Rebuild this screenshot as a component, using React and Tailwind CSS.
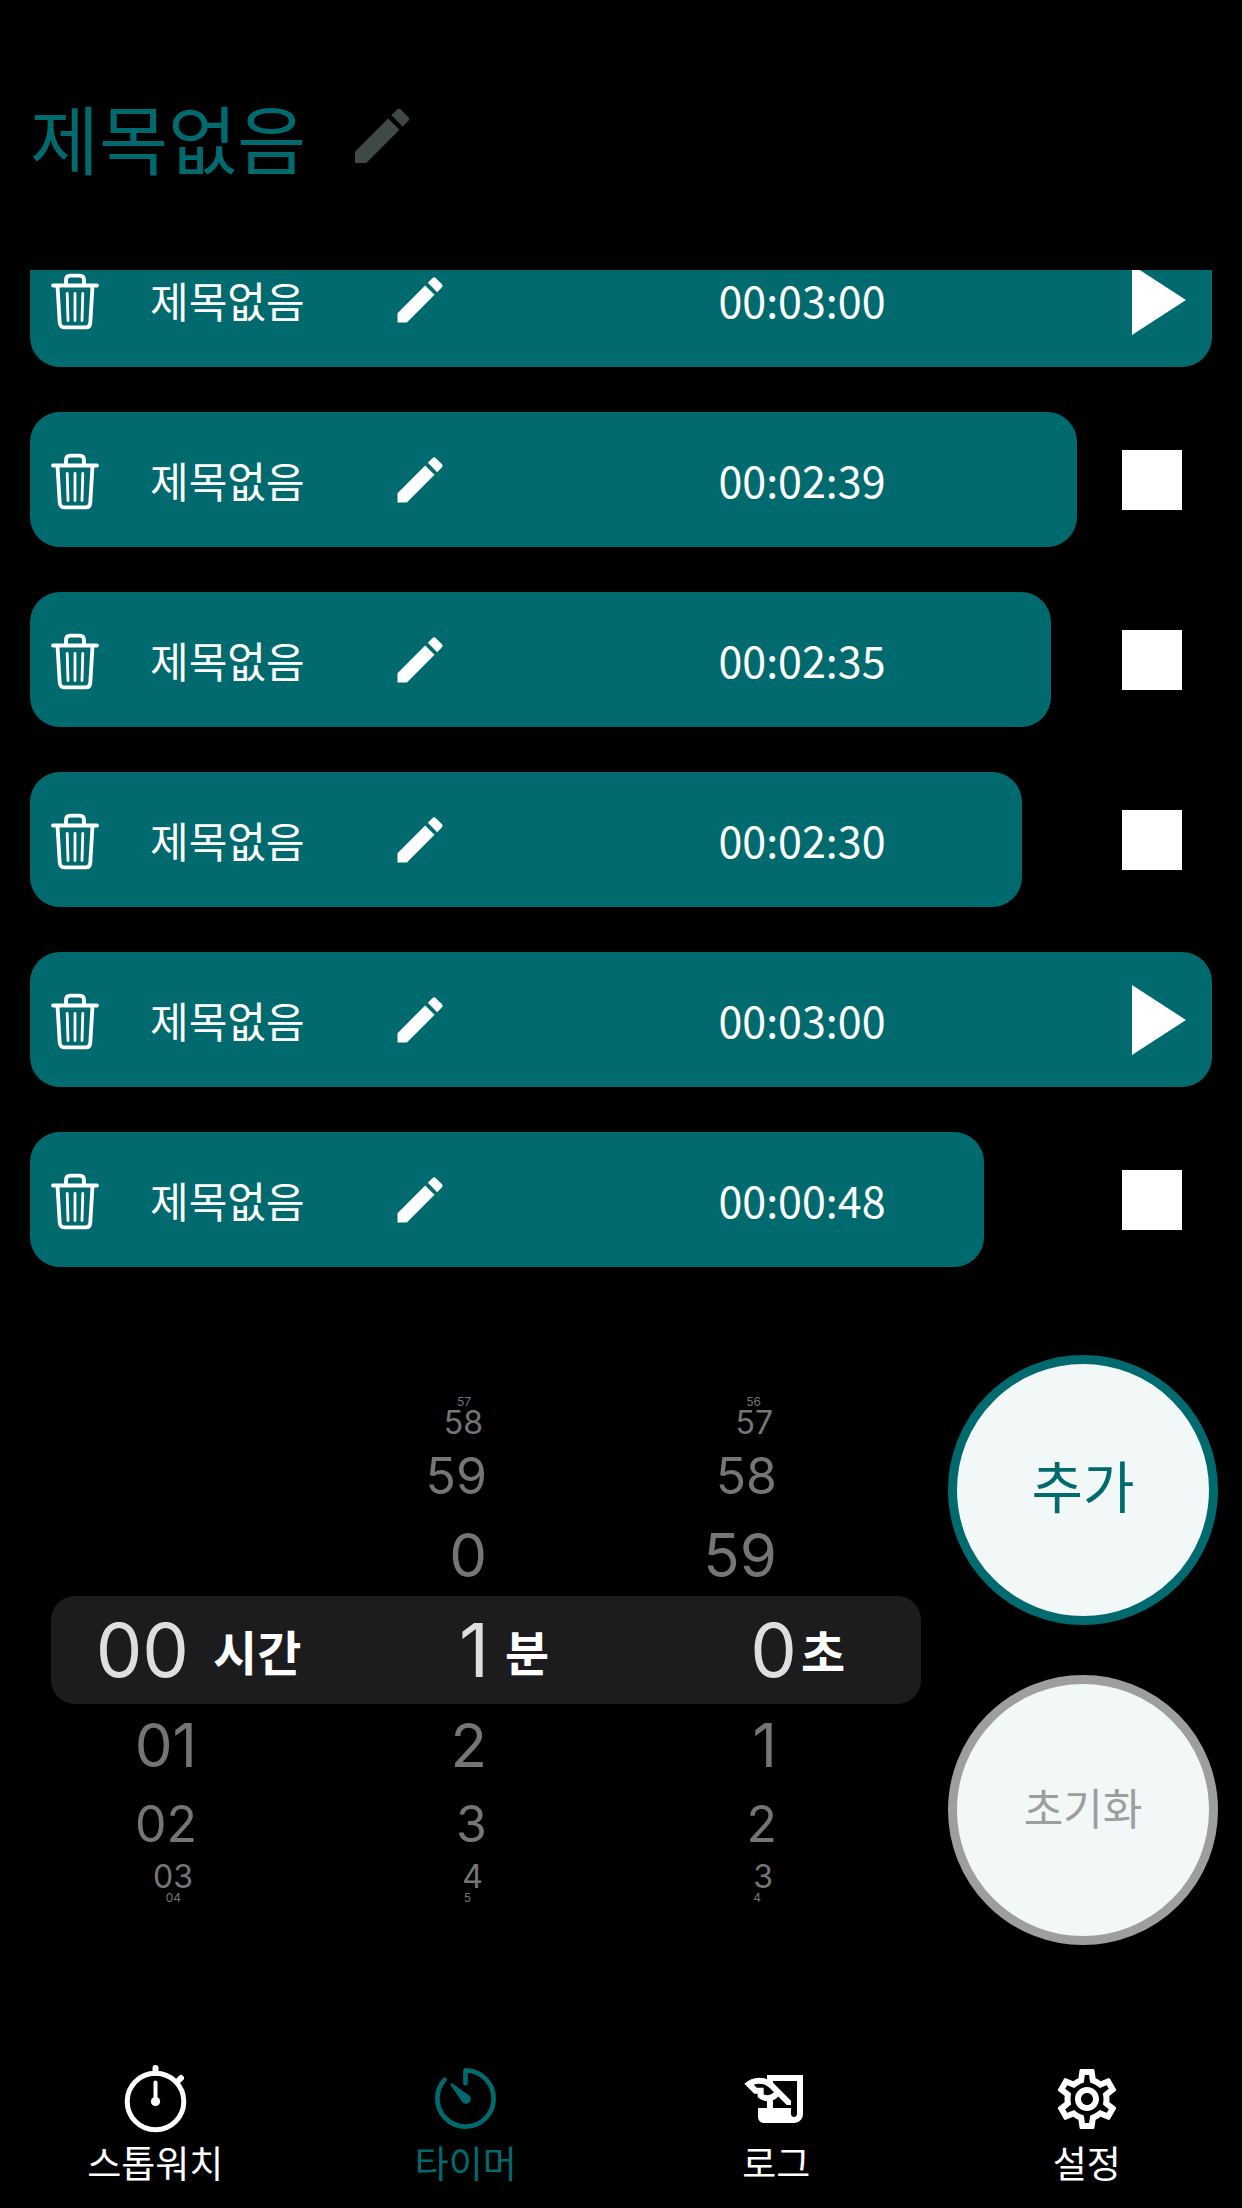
import { useState } from "react";
import { MdEdit, MdHistoryEdu, MdOutlineSettings } from "react-icons/md";
import { IoTimerOutline } from "react-icons/io5";

const initialTimers = [
  { id: 1, title: "제목없음", time: "00:03:00", left: 100, running: false },
  { id: 2, title: "제목없음", time: "00:02:39", left: 88.6, running: true },
  { id: 3, title: "제목없음", time: "00:02:35", left: 86.4, running: true },
  { id: 4, title: "제목없음", time: "00:02:30", left: 83.9, running: true },
  { id: 5, title: "제목없음", time: "00:03:00", left: 100, running: false },
  { id: 6, title: "제목없음", time: "00:00:48", left: 80.7, running: true },
];

const wheels = [
  {
    unit: "시간",
    above: ["", "", "", ""],
    value: "00",
    below: ["01", "02", "03", "04"],
    valueClass: "w-[138px]",
    unitClass: "pl-6",
  },
  {
    unit: "분",
    above: ["57", "58", "59", "0"],
    value: "1",
    below: ["2", "3", "4", "5"],
    valueClass: "w-[148px]",
    unitClass: "pl-4",
  },
  {
    unit: "초",
    above: ["56", "57", "58", "59"],
    value: "0",
    below: ["1", "2", "3", "4"],
    valueClass: "w-[166px]",
    unitClass: "pl-1",
  },
];

// rows get smaller the further they are from the selected one
const aboveRows = [
  "h-[12px] pr-4 text-[12px] leading-[12px]",
  "h-[30px] pr-1 text-[32px] leading-[30px]",
  "h-[76px] text-[50px] leading-[76px]",
  "h-[82px] text-[60px] leading-[82px]",
];

const belowRows = [
  "h-[82px] text-[60px] leading-[82px]",
  "h-[76px] text-[50px] leading-[76px]",
  "h-[30px] pr-1 text-[32px] leading-[30px]",
  "h-[12px] pr-4 text-[12px] leading-[12px]",
];

const tabs = [
  { value: "stopwatch", label: "스톱워치", icon: <StopwatchIcon /> },
  { value: "timer", label: "타이머", icon: <IoTimerOutline size={75} /> },
  { value: "log", label: "로그", icon: <MdHistoryEdu size={72} /> },
  { value: "settings", label: "설정", icon: <MdOutlineSettings size={72} /> },
];

function TrashIcon() {
  return (
    <svg
      viewBox="0 0 64 64"
      className="size-16"
      fill="none"
      stroke="currentColor"
      strokeLinecap="round"
      strokeLinejoin="round"
    >
      <path
        strokeWidth="3.8"
        d="M10 17.500H54M14.500 18L16.700 54.500C16.900 57.500 18.300 59.300 21 59.300H43C45.700 59.300 47.100 57.500 47.300 54.500L49.500 18M23 17V12Q23 7.700 27.300 7.700H36.700Q41 7.700 41 12V17"
      />
      <path strokeWidth="2.800" d="M24.200 25.500L25 52.500M32 25.500V52.500M39.800 25.500L39 52.500" />
    </svg>
  );
}

function StopwatchIcon() {
  return (
    <svg viewBox="0 0 75 75" width="75" height="75" fill="none" stroke="currentColor" strokeLinecap="round">
      <circle cx="37.500" cy="40.500" r="28.300" strokeWidth="5" />
      <path strokeWidth="6" d="M37.500 7V12M60 20L63 17" />
      <path strokeWidth="4" d="M37.500 21.500V40" />
      <circle cx="37.500" cy="40.500" r="4.600" fill="currentColor" stroke="none" />
    </svg>
  );
}

function TimerRow({ timer, onToggle, onDelete }) {
  return (
    <li className="grid h-[135px]">
      <div
        className="col-start-1 row-start-1 rounded-[30px] bg-[#006a6e]"
        style={{ width: `${timer.left}%` }}
      />
      <div className="col-start-1 row-start-1 grid grid-cols-[120px_240px_60px_1fr_120px] items-center">
        <button aria-label="삭제" onClick={onDelete} className="ml-[13px] justify-self-start">
          <TrashIcon />
        </button>
        <span className="text-[42px]">{timer.title}</span>
        <button aria-label="제목 수정">
          <MdEdit size={60} />
        </button>
        <span className="pl-[62px] text-center text-[43px]">{timer.time}</span>
        <button
          aria-label={timer.running ? "정지" : "시작"}
          onClick={onToggle}
          className="justify-self-center"
        >
          {timer.running ? (
            <svg viewBox="0 0 72 72" className="size-[72px]" fill="currentColor">
              <path d="M6 6H66V66H6Z" />
            </svg>
          ) : (
            <svg viewBox="0 0 72 72" className="size-[72px]" fill="currentColor">
              <path d="M16 1L70 36L16 71Z" />
            </svg>
          )}
        </button>
      </div>
    </li>
  );
}

function Wheel({ wheel }) {
  return (
    <div role="listbox" aria-label={wheel.unit} className="flex-1 text-[#757575]">
      {wheel.above.map((n, idx) => (
        <div key={idx} className={`w-[146px] text-right ${aboveRows[idx]}`}>
          {n}
        </div>
      ))}
      <div role="option" aria-selected="true" className="flex h-[108px] items-center">
        <span className={`text-right text-[74px] text-[#dedee0] ${wheel.valueClass}`}>
          {wheel.value}
        </span>
        <span
          className={`font-['Noto_Sans_CJK_KR',sans-serif] text-[48px] font-bold text-white ${wheel.unitClass}`}
        >
          {wheel.unit}
        </span>
      </div>
      {wheel.below.map((n, idx) => (
        <div key={idx} className={`w-[146px] text-right ${belowRows[idx]}`}>
          {n}
        </div>
      ))}
    </div>
  );
}

export default function App() {
  const [timers, setTimers] = useState(initialTimers);
  const [activeTab, setActiveTab] = useState("timer");

  const toggle = (id) =>
    setTimers(timers.map((t) => (t.id === id ? { ...t, running: !t.running } : t)));
  const remove = (id) => setTimers(timers.filter((t) => t.id !== id));

  return (
    <div className="flex min-h-screen flex-col bg-black font-['Noto_Sans_CJK_KR',sans-serif] text-white">
      <header className="flex h-[270px] items-center gap-10 px-[30px] pt-[2px]">
        <h1 className="text-[75px] leading-none text-[#006a6e]">제목없음</h1>
        <button aria-label="제목 수정" className="text-[#404848]">
          <MdEdit size={72} />
        </button>
      </header>

      <div className="overflow-hidden px-[30px]">
        <ul className="-mt-[38px] flex flex-col gap-[45px]">
          {timers.map((timer) => (
            <TimerRow
              key={timer.id}
              timer={timer}
              onToggle={() => toggle(timer.id)}
              onDelete={() => remove(timer.id)}
            />
          ))}
        </ul>
      </div>

      <main className="mt-[88px] flex items-center gap-[27px] pr-6 pl-[51px]">
        <div className="grid flex-1 items-center font-['Inter',sans-serif]">
          <div className="col-start-1 row-start-1 h-[108px] rounded-[24px] bg-[#1c1c1e]" />
          <div className="col-start-1 row-start-1 flex">
            {wheels.map((wheel) => (
              <Wheel key={wheel.unit} wheel={wheel} />
            ))}
          </div>
        </div>
        <div className="flex flex-col gap-[50px]">
          <button className="size-[270px] rounded-full border-[9px] border-[#006a6e] bg-[#f2f8f8] pb-3 text-[56px] text-[#006a6e]">
            추가
          </button>
          <button className="size-[270px] rounded-full border-[9px] border-[#9e9e9e] bg-[#f2f8f8] pb-2 text-[43px] text-[#9e9e9e]">
            초기화
          </button>
        </div>
      </main>

      <nav className="mt-auto grid grid-cols-4 pb-[22px]">
        {tabs.map((tab) => (
          <button
            key={tab.value}
            onClick={() => setActiveTab(tab.value)}
            className={`flex flex-col items-center gap-[2px] text-[37px] leading-[48px] ${
              activeTab === tab.value ? "text-[#006a6e]" : "text-white"
            }`}
          >
            <span className="flex h-[75px] items-center">{tab.icon}</span>
            {tab.label}
          </button>
        ))}
      </nav>
    </div>
  );
}
